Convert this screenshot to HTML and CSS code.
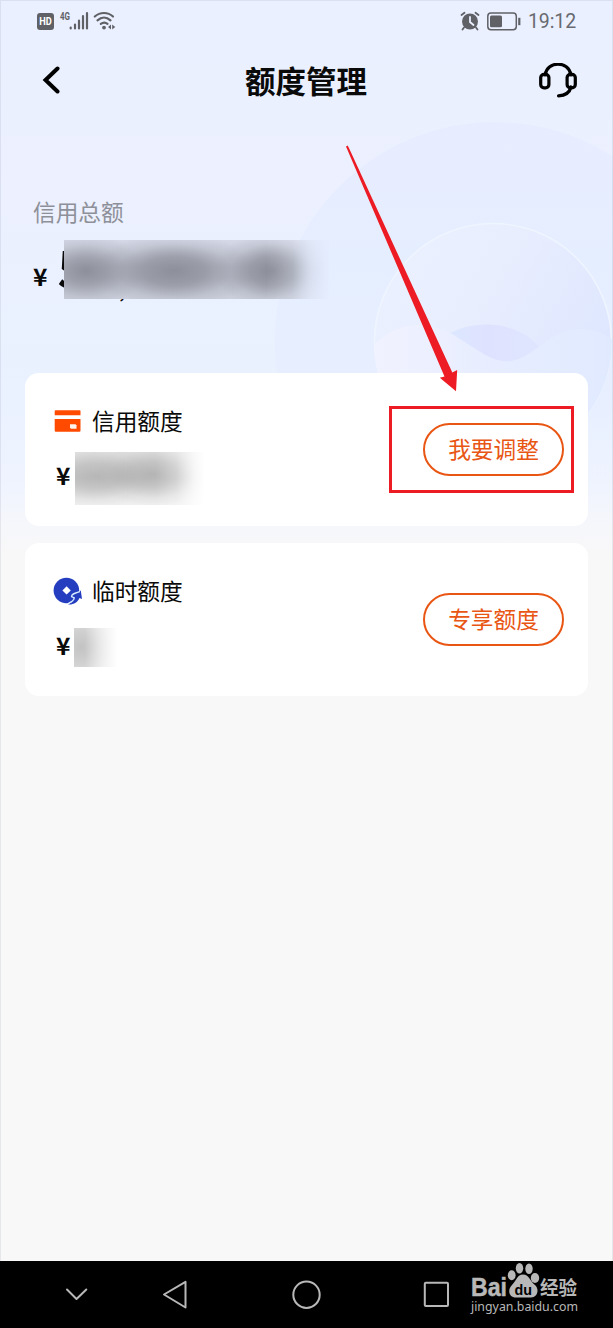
FILE: index.html
```html
<!DOCTYPE html>
<html lang="zh-CN">
<head>
<meta charset="utf-8">
<title>额度管理</title>
<link rel="stylesheet" href="styles.css">
</head>
<body>
<div class="phone">
  <svg class="backdrop" viewBox="0 0 613 560" aria-hidden="true">
    <defs>
      <linearGradient id="base" x1="0" y1="0" x2="0" y2="1">
        <stop offset="0" stop-color="#eaf0ff"/><stop offset=".35" stop-color="#ecf0ff"/>
        <stop offset=".65" stop-color="#e9f1ff"/><stop offset=".85" stop-color="#eef3ff"/>
        <stop offset=".94" stop-color="#f6f7fb"/><stop offset="1" stop-color="#f8f8f8"/>
      </linearGradient>
      <linearGradient id="halo" x1="0" y1="0" x2="0" y2="1">
        <stop offset="0" stop-color="#e8ecff"/><stop offset=".3" stop-color="#e5eeff"/>
        <stop offset=".65" stop-color="#e6eeff" stop-opacity=".7"/><stop offset=".85" stop-color="#eef3ff" stop-opacity="0"/>
      </linearGradient>
      <linearGradient id="ball" x1="0" y1="0" x2="1" y2=".6">
        <stop offset="0" stop-color="#ebf1ff"/><stop offset=".45" stop-color="#e9eefe"/><stop offset="1" stop-color="#dde6ff"/>
      </linearGradient>
      <linearGradient id="wave" x1="0" y1="0" x2="1" y2="0">
        <stop offset="0" stop-color="#f1f2ff"/><stop offset=".5" stop-color="#e7edff"/><stop offset="1" stop-color="#e0eaff"/>
      </linearGradient>
      <linearGradient id="dip" x1="0" y1="0" x2="1" y2="0">
        <stop offset="0" stop-color="#dce8ff"/><stop offset=".4" stop-color="#dfe2ff"/><stop offset="1" stop-color="#dfe5ff"/>
      </linearGradient>
      <clipPath id="ballClip"><circle cx="493" cy="342" r="119"/></clipPath>
    </defs>
    <rect width="613" height="560" fill="url(#base)"/>
    <circle cx="495" cy="342" r="220" fill="url(#halo)"/>
    <circle cx="493" cy="342" r="118.5" fill="url(#ball)" stroke="#eff5ff" stroke-width="1.6"/>
    <g clip-path="url(#ballClip)">
      <path d="M449 334C470 321 515 318 540 348L510 372L470 360Z" fill="url(#dip)"/>
      <path d="M370 350C395 318 430 322 452 334C477 349 492 363 510 361C533 359 549 329 580 329C597 329 607 335 617 343V470H370Z" fill="url(#wave)"/>
    </g>
  </svg>

  <div class="statusbar">
    <svg class="signals" width="80" height="20" viewBox="0 0 80 20" fill="none">
      <rect x="1" y="3" width="17" height="17" rx="3" fill="#606166"/>
      <text class="hd" x="9.5" y="15.200" textLength="12.500" lengthAdjust="spacingAndGlyphs">HD</text>
      <text class="gen" x="24" y="9.800" textLength="10" lengthAdjust="spacingAndGlyphs">4G</text>
      <path d="M34.7 17.5v1M39 14.5v4M43 10.7v7.8M47 6.2v12.3M51 3.200v15.300" stroke="#606166" stroke-width="2.200" stroke-linecap="round"/>
      <g stroke="#606166" stroke-width="2.200" stroke-linecap="round"><path d="M58.800 6.500C64 1.800 72 1.800 77 6.500M61.500 10.300C65.500 6.800 70.500 6.800 74.500 10.300M64.800 13.800C67 12.200 69.500 12.200 71.500 13.800"/></g>
      <circle cx="68" cy="17.600" r="1.900" fill="#606166"/>
      <path d="M75 14.500v5l-3-2.500zM76.200 14.500v5l3-2.500z" fill="#606166"/>
    </svg>
    <div class="statusright">
      <svg width="20" height="20" viewBox="0 0 20 20" fill="none">
        <circle cx="10" cy="10.500" r="8" fill="#606166"/>
        <path d="M1.500 4L4.500 1.800M15.500 1.800L18.500 4M4 16.500L2.500 18.500M16 16.500l1.500 2" stroke="#606166" stroke-width="1.800" stroke-linecap="round"/>
        <path d="M10 6v5l3.500 3" stroke="#eaf0ff" stroke-width="1.800" stroke-linecap="round"/>
      </svg>
      <svg width="34" height="19" viewBox="0 0 34 19" fill="none">
        <rect x=".8" y="1" width="28.500" height="16.800" rx="3.200" stroke="#606166" stroke-width="1.500"/>
        <rect x="3" y="3.500" width="12" height="11.800" rx="1.500" fill="#606166"/>
        <path d="M32.300 5.800v7.400" stroke="#606166" stroke-width="2.200"/>
      </svg>
      <span class="time">19:12</span>
    </div>
  </div>

  <header class="header">
    <svg width="20" height="30" viewBox="0 0 20 30" fill="none"><path d="M16.500 2.500L4.500 14L16.500 25.500" stroke="#000" stroke-width="4" stroke-linecap="round"/></svg>
    <h1 class="title">额度管理</h1>
    <svg width="38" height="36" viewBox="0 0 38 36" fill="none" stroke="#000" stroke-width="3.200">
      <path d="M6 12C8.500 -2.500 29.500 -2.500 32 12M32 24C30.500 30 26.500 32.500 19.500 32.800" stroke-linecap="round"/>
      <rect x="1.700" y="11.300" width="8.200" height="13.500" rx="3.300"/><rect x="28.100" y="11.300" width="8.200" height="13.500" rx="3.300"/>
    </svg>
  </header>

  <section class="summary">
    <div class="label">信用总额</div>
    <div class="total">
      <span class="yen">¥</span><span class="digits">5</span>
      <span class="mark">,</span>
      <div class="mask-total"></div>
    </div>
  </section>

  <main class="cards">
    <section class="card">
      <div class="info">
        <div class="name">
          <svg width="28" height="28" viewBox="0 0 28 28"><path fill="#ff4a00" d="M1.500 3.200h24.200q.8 0 .8.800v4.200H.7V4q0-.8.800-.8zM.7 12h25.800v11.500q0 1.200-1.200 1.200H1.900Q.7 24.700.7 23.500z"/><path d="M16 17.200h5.500l1 1v3.500H17l-1-1z" fill="#fff3ed"/></svg>
          <span>信用额度</span>
        </div>
        <div class="amount"><span class="yen">¥</span><div class="mask-credit"></div></div>
      </div>
      <button class="pill">我要调整</button>
    </section>
    <section class="card">
      <div class="info">
        <div class="name">
          <svg width="30" height="28" viewBox="0 0 30 28">
            <circle cx="13.400" cy="13.500" r="12.800" fill="#253ec0"/>
            <path d="M13.600 9.200l4.200 4.200-4.200 4.200-4.200-4.200z" fill="#fff"/>
            <path d="M15 27.500C19 25.500 21 23.500 21.500 20.500L19 19L27.800 13.500L29 22L26.500 21C25 25 20.500 28 15 27.500z" fill="#253ec0"/>
            <path d="M15.500 26C20 24.500 21 22.500 21.300 20.800L18.500 19.500C18.500 17 22 16 27 14.500" fill="none" stroke="#d9edff" stroke-width="1.300"/>
          </svg>
          <span>临时额度</span>
        </div>
        <div class="amount"><span class="yen">¥</span><div class="mask-temp"></div></div>
      </div>
      <button class="pill">专享额度</button>
    </section>
  </main>

  <nav class="navbar">
    <svg width="450" height="67" viewBox="0 0 450 67" fill="none" stroke="#b8b8b8" stroke-width="2" stroke-linecap="round" stroke-linejoin="round">
      <path d="M67 28.500L76.500 38L86.300 28.500"/>
      <path d="M185.500 20.800V46.500L164 33.500z"/>
      <circle cx="306.500" cy="33.700" r="13.200"/>
      <rect x="424.800" y="21.800" width="23.200" height="23.200" rx="1"/>
    </svg>
    <svg class="logo" width="120" height="67" viewBox="0 0 120 67" fill="#b8b8b8">
      <text class="brand" x="3" y="34.700" textLength="36" lengthAdjust="spacingAndGlyphs">Bai</text>
      <ellipse cx="43.700" cy="14.300" rx="3.900" ry="5"/><ellipse cx="51.500" cy="7.200" rx="3.700" ry="5.200"/><ellipse cx="61" cy="7.700" rx="3.700" ry="5.200"/><ellipse cx="67" cy="17" rx="4.200" ry="5"/>
      <path d="M55 13.500C61 13.500 62 20 67 24C72 29 69 36.500 63 36.500H48C41 36.500 39 29 44 24C49 19 49 13.500 55 13.500z"/>
      <text class="du" x="46.500" y="33.500" textLength="17.500" lengthAdjust="spacingAndGlyphs">du</text>
      <text class="exp" x="72" y="34" textLength="37" lengthAdjust="spacingAndGlyphs">经验</text>
      <text class="site" x="3" y="50" textLength="107" lengthAdjust="spacingAndGlyphs">jingyan.baidu.com</text>
    </svg>
  </nav>

  <div class="highlight"></div>
  <svg class="arrow" width="120" height="250" viewBox="0 0 120 250"><path d="M6 6.500L7.500 5.500L8.500 7L112.300 232.500L117.200 230L116 251.300L99.800 237.800L104.500 236.500z" fill="#ed1c24"/></svg>
</div>
</body>
</html>
```
FILE: styles.css
```css
* { box-sizing: border-box; }
body { margin: 0; background: #f8f8f8; }
.phone {
  position: relative;
  width: 613px;
  height: 1328px;
  display: flex;
  flex-direction: column;
  overflow: hidden;
  background: #f8f8f8;
  font-family: "Noto Sans CJK SC", sans-serif;
  color: #0a0a0a;
  isolation: isolate;
}
.phone::after {
  content: "";
  position: absolute;
  inset: 0 0 67px;
  border: 1px solid rgba(120, 130, 150, .14);
  border-bottom: 0;
}
.backdrop { position: absolute; z-index: -1; top: 0; left: 0; width: 613px; height: 560px; }

.statusbar { height: 43px; padding: 10px 37px 0 36px; display: flex; justify-content: space-between; align-items: flex-start; }
.statusright { display: flex; gap: 7px; align-items: center; height: 22px; }
.time { font: 19.5px/24px Roboto, sans-serif; color: #686a70; width: 48px; padding-top: 2px; white-space: nowrap; letter-spacing: -.1px; }
.hd { font: bold 10px Roboto, sans-serif; fill: #fff; text-anchor: middle; }
.gen { font: bold 10px Roboto, sans-serif; fill: #606166; }

.header { height: 76px; padding: 0 36px 0 41px; display: flex; justify-content: space-between; align-items: center; }
.title { margin: 0 0 2px 12px; font-size: 30.5px; line-height: 44px; font-weight: 700; }

.summary { height: 254px; padding: 76px 33px 0; }
.label { font-size: 22.7px; line-height: 34px; color: #8e9099; }
.total { position: relative; height: 70px; display: flex; }
.total .yen { padding-top: 31px; }
.yen { font: 700 24.5px/32px "Noto Sans CJK SC", sans-serif; }
.digits { font: 700 50px/60px "Noto Sans CJK SC", sans-serif; margin: 7px 0 0 10px; }
.mark { position: absolute; left: 86px; top: 42px; font: 24px/32px "Noto Sans CJK SC", sans-serif; }

.mask-total {
  position: absolute;
  left: 31px;
  top: 11px;
  width: 266px;
  height: 59px;
  background:
    radial-gradient(ellipse 58px 38px at 22px 31px, rgba(124, 127, 137, .75), rgba(124, 127, 137, .5) 35%, rgba(124, 127, 137, .15) 70%, transparent),
    radial-gradient(ellipse 82px 38px at 110px 31px, rgba(124, 127, 137, .75), rgba(124, 127, 137, .55) 38%, rgba(124, 127, 137, .15) 72%, transparent),
    radial-gradient(ellipse 58px 38px at 208px 31px, rgba(124, 127, 137, .8), rgba(124, 127, 137, .55) 38%, rgba(124, 127, 137, .15) 72%, transparent),
    linear-gradient(#d5d8e7, #bfc2ce 45%, #bfc2ce 65%, #cdd1de);
  -webkit-mask-image: linear-gradient(to right, #000 76%, rgba(0, 0, 0, .75) 86%, rgba(0, 0, 0, .25) 93%, transparent);
  mask-image: linear-gradient(to right, #000 76%, rgba(0, 0, 0, .75) 86%, rgba(0, 0, 0, .25) 93%, transparent);
}

.cards { flex: 1; padding: 0 25px; display: flex; flex-direction: column; gap: 17px; }
.card { height: 153px; padding: 0 24px 0 28px; border-radius: 14px; background: #fff; display: flex; justify-content: space-between; align-items: center; }
.info { height: 153px; padding-top: 31px; }
.name { display: flex; align-items: center; gap: 10px; height: 34px; font-size: 22.7px; line-height: 34px; }
.name svg { width: 30px; flex: none; }
.name span { margin-left: -1px; }
.amount { display: flex; align-items: flex-start; height: 60px; padding-left: 3px; }
.amount .yen { margin-top: 21px; width: 19px; }
.mask-credit {
  margin-top: 14px;
  width: 130px;
  height: 53px;
  background:
    radial-gradient(ellipse 60px 32px at 78px 22px, rgba(150, 150, 150, .55), rgba(150, 150, 150, .35) 40%, rgba(150, 150, 150, .08) 75%, transparent),
    radial-gradient(ellipse 60px 32px at 20px 24px, rgba(150, 150, 150, .5), rgba(150, 150, 150, .35) 40%, rgba(150, 150, 150, .08) 75%, transparent),
    linear-gradient(#e3e3e3, #d8d8d8 50%, #f0f0f0);
  -webkit-mask-image: linear-gradient(to right, #000 62%, rgba(0, 0, 0, .75) 78%, rgba(0, 0, 0, .2) 92%, transparent);
  mask-image: linear-gradient(to right, #000 62%, rgba(0, 0, 0, .75) 78%, rgba(0, 0, 0, .2) 92%, transparent);
}
.mask-temp {
  margin: 20px 0 0 -1px;
  width: 44px;
  height: 39px;
  background: radial-gradient(ellipse 34px 32px at 7px 19px, #c3c3c3, #cfcfcf 45%, #e0e0e0);
  -webkit-mask-image: linear-gradient(to right, #000 25%, rgba(0, 0, 0, .5) 60%, transparent);
  mask-image: linear-gradient(to right, #000 25%, rgba(0, 0, 0, .5) 60%, transparent);
}
.pill {
  width: 141px;
  height: 53px;
  padding: 0 0 2px;
  border: 2px solid #e95513;
  border-radius: 27px;
  background: #fff;
  color: #e95513;
  font: 22.7px/47px "Noto Sans CJK SC", sans-serif;
}

.navbar { height: 67px; background: #000; display: flex; gap: 18px; }
.brand { font: bold 25px "Liberation Sans", sans-serif; stroke: #b8b8b8; stroke-width: .5px; }
.du { font: bold 15.5px "Liberation Sans", sans-serif; fill: #000; }
.exp { font: bold 19px "Noto Sans CJK SC", sans-serif; }
.site { font: 13px "Noto Sans", sans-serif; }

.highlight { position: absolute; left: 389px; top: 406px; width: 185px; height: 87px; border: 3px solid #ed1c24; }
.arrow { position: absolute; left: 340px; top: 140px; overflow: visible; }
```
